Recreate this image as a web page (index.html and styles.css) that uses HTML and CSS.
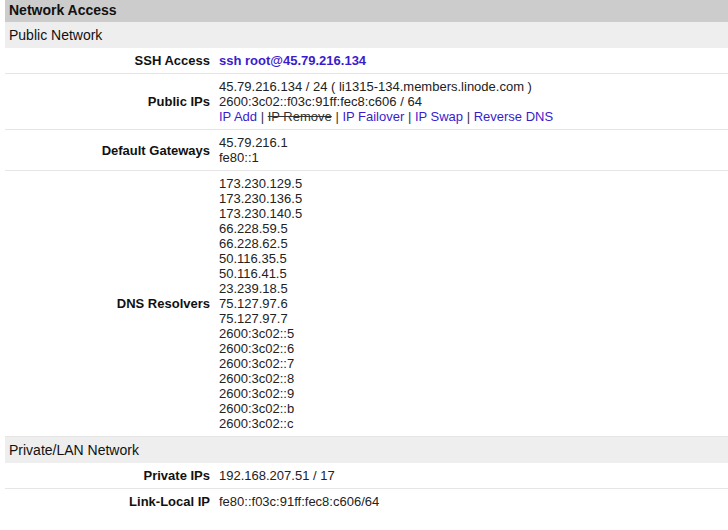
FILE: index.html
```html
<!DOCTYPE html>
<html>

<head>
    <meta charset="utf-8">
    <link rel="stylesheet" href="styles.css">
</head>

<body>

    <div class="panel">
        <div class="panel-title">Network Access</div>

        <div class="section-title">Public Network</div>

        <div class="row">
            <div class="label">SSH Access</div>
            <div class="value"><a class="ssh" href="#">ssh root@45.79.216.134</a></div>
        </div>

        <div class="row">
            <div class="label">Public IPs</div>
            <div class="value">
                <div>45.79.216.134 / 24 ( li1315-134.members.linode.com )</div>
                <div>2600:3c02::f03c:91ff:fec8:c606 / 64</div>
                <div class="actions">
                    <a href="#">IP Add</a> | <span class="disabled">IP Remove</span> |
                    <a href="#">IP Failover</a> | <a href="#">IP Swap</a> | <a href="#">Reverse DNS</a>
                </div>
            </div>
        </div>

        <div class="row">
            <div class="label">Default Gateways</div>
            <div class="value">
                <div>45.79.216.1</div>
                <div>fe80::1</div>
            </div>
        </div>

        <div class="row">
            <div class="label">DNS Resolvers</div>
            <div class="value">
                <div>173.230.129.5</div>
                <div>173.230.136.5</div>
                <div>173.230.140.5</div>
                <div>66.228.59.5</div>
                <div>66.228.62.5</div>
                <div>50.116.35.5</div>
                <div>50.116.41.5</div>
                <div>23.239.18.5</div>
                <div>75.127.97.6</div>
                <div>75.127.97.7</div>
                <div>2600:3c02::5</div>
                <div>2600:3c02::6</div>
                <div>2600:3c02::7</div>
                <div>2600:3c02::8</div>
                <div>2600:3c02::9</div>
                <div>2600:3c02::b</div>
                <div>2600:3c02::c</div>
            </div>
        </div>

        <div class="section-title">Private/LAN Network</div>

        <div class="row">
            <div class="label">Private IPs</div>
            <div class="value">192.168.207.51 / 17</div>
        </div>

        <div class="row last">
            <div class="label">Link-Local IP</div>
            <div class="value">fe80::f03c:91ff:fec8:c606/64</div>
        </div>
    </div>

</body>

</html>
```

FILE: styles.css
```css
body {
    margin: 0 0 0 5px;
    font-family: "Liberation Sans", Arial, sans-serif;
    color: #222;
    background: #fff;
}

.panel-title {
    background: #cccccc;
    font-size: 14px;
    font-weight: bold;
    line-height: 16px;
    padding: 2px 4px 4px;
    color: #111;
}

.section-title {
    background: #eeeeee;
    font-size: 14px;
    line-height: 16px;
    padding: 5px 4px 5px;
    color: #111;
}

.row {
    display: grid;
    grid-template-columns: 205px 1fr;
    column-gap: 9px;
    align-items: center;
    padding: 5px 0 5px;
    border-bottom: 1px solid #e6e6e6;
}

.row.first {
    padding-bottom: 4px;
}

.row.last {
    border-bottom: none;
}

.label {
    text-align: right;
    font-size: 13px;
    font-weight: bold;
    color: #111;
}

.value {
    font-size: 13px;
    line-height: 15px;
    color: #222;
}

.value a {
    color: #3a1ccc;
    text-decoration: none;
}

.value a.ssh {
    font-weight: bold;
}

.actions {
    color: #333;
}

.disabled {
    text-decoration: line-through;
    color: #333;
}
```
